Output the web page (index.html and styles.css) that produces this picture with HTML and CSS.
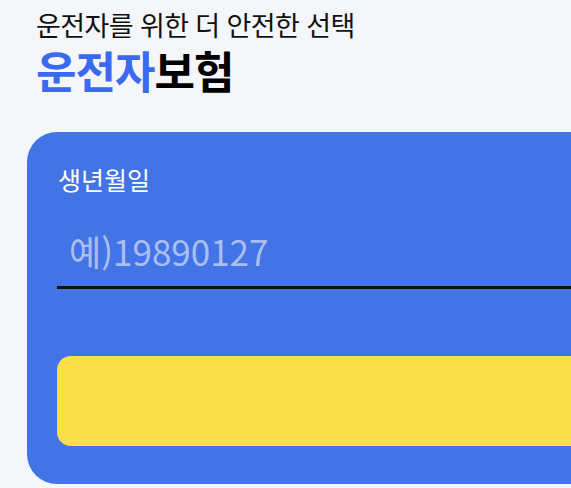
FILE: index.html
```html
<!DOCTYPE html>
<html lang="ko">
<head>
<meta charset="utf-8">
<link rel="stylesheet" href="styles.css">
</head>
<body>
<div class="page">
  <header class="head">
    <p class="sub">운전자를 위한 더 안전한 선택</p>
    <h1 class="title"><span class="accent">운전자</span>보험</h1>
  </header>
  <section class="card">
    <label class="label" for="birth">생년월일</label>
    <div class="field">
      <input id="birth" class="input" type="text" placeholder="예)19890127">
    </div>
    <button class="btn" type="button"></button>
  </section>
</div>
</body>
</html>
```
FILE: styles.css
```css
html, body {
  margin: 0;
  padding: 0;
  background: #f5f6fa;
  overflow: hidden;
  font-family: "Noto Sans CJK KR", "Noto Sans", sans-serif;
}
.page {
  padding: 9px 0 0 27px;
  width: 700px;
}
.head {
  padding-left: 9px;
}
.sub {
  margin: 0;
  font-size: 27px;
  line-height: 32px;
  letter-spacing: -0.6px;
  color: #111;
}
.title {
  margin: 3px 0 0;
  font-size: 44px;
  line-height: 52px;
  font-weight: 700;
  letter-spacing: -1px;
  color: #000;
}
.accent {
  color: #3a6af2;
}
.card {
  margin-top: 36px;
  background: #4374e6;
  border-radius: 30px 0 0 30px;
  padding: 32px 0 38px 30px;
  display: flex;
  flex-direction: column;
}
.label {
  color: #fff;
  font-size: 25px;
  line-height: 30px;
  padding-left: 1px;
}
.field {
  margin-top: 16px;
  border-bottom: 3px solid #111;
}
.input {
  display: block;
  width: 100%;
  box-sizing: border-box;
  border: 0;
  outline: none;
  background: transparent;
  font-family: inherit;
  font-size: 35px;
  line-height: 50px;
  height: 76px;
  padding: 4px 0 0 12px;
  color: #fff;
}
.input::placeholder {
  color: #aabef0;
}
.btn {
  margin-top: 67px;
  height: 90px;
  border: 0;
  border-radius: 14px 0 0 14px;
  background: #fadf4b;
}
```
